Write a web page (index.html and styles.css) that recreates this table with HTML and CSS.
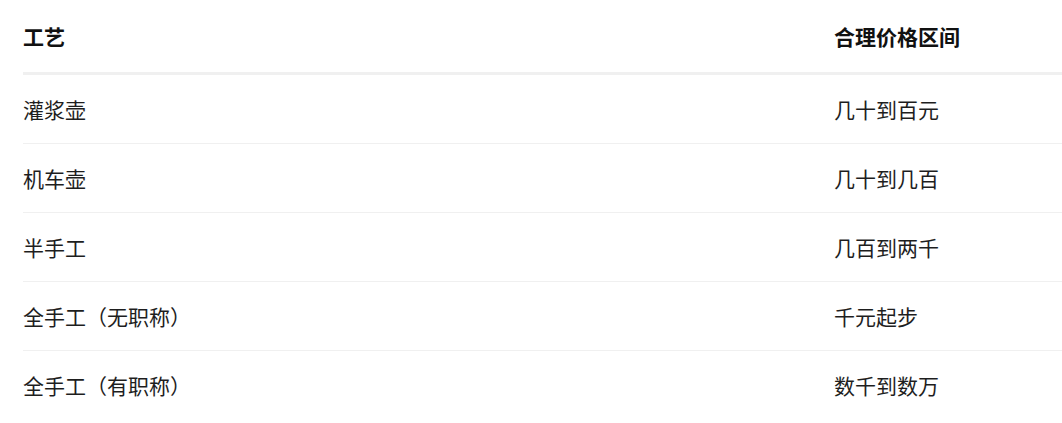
FILE: index.html
```html
<!DOCTYPE html>
<html lang="zh-CN">
<head>
    <meta charset="UTF-8">
    <meta name="viewport" content="width=device-width, initial-scale=1.0">
    <title>工艺与价格</title>
    <link rel="stylesheet" href="styles.css">
</head>
<body>
    <div class="table-wrap">
        <table class="price-table">
            <thead>
                <tr>
                    <th class="col-craft">工艺</th>
                    <th>合理价格区间</th>
                </tr>
            </thead>
            <tbody>
                <tr><td>灌浆壶</td><td>几十到百元</td></tr>
                <tr><td>机车壶</td><td>几十到几百</td></tr>
                <tr><td>半手工</td><td>几百到两千</td></tr>
                <tr><td>全手工（无职称）</td><td>千元起步</td></tr>
                <tr><td>全手工（有职称）</td><td>数千到数万</td></tr>
            </tbody>
        </table>
    </div>
</body>
</html>
```

FILE: styles.css
```css
body {
    margin: 0;
    background-color: #fff;
    font-family: "Noto Sans CJK SC", "Noto Sans", sans-serif;
}
.table-wrap {
    padding: 0 0 0 23px;
}
.price-table {
    width: 100%;
    border-collapse: collapse;
    font-size: 21px;
    color: #1e1e1e;
}
.price-table th {
    text-align: left;
    font-weight: bold;
    color: #111;
    height: 72px;
    padding: 0;
    border-bottom: 3px solid #f0f0f0;
    vertical-align: middle;
}
.price-table .col-craft {
    width: 811px;
}
.price-table td {
    height: 68px;
    padding: 0;
    border-bottom: 1px solid #f0f0f0;
    vertical-align: middle;
}
.price-table tbody tr:last-child td {
    border-bottom: none;
}
```
